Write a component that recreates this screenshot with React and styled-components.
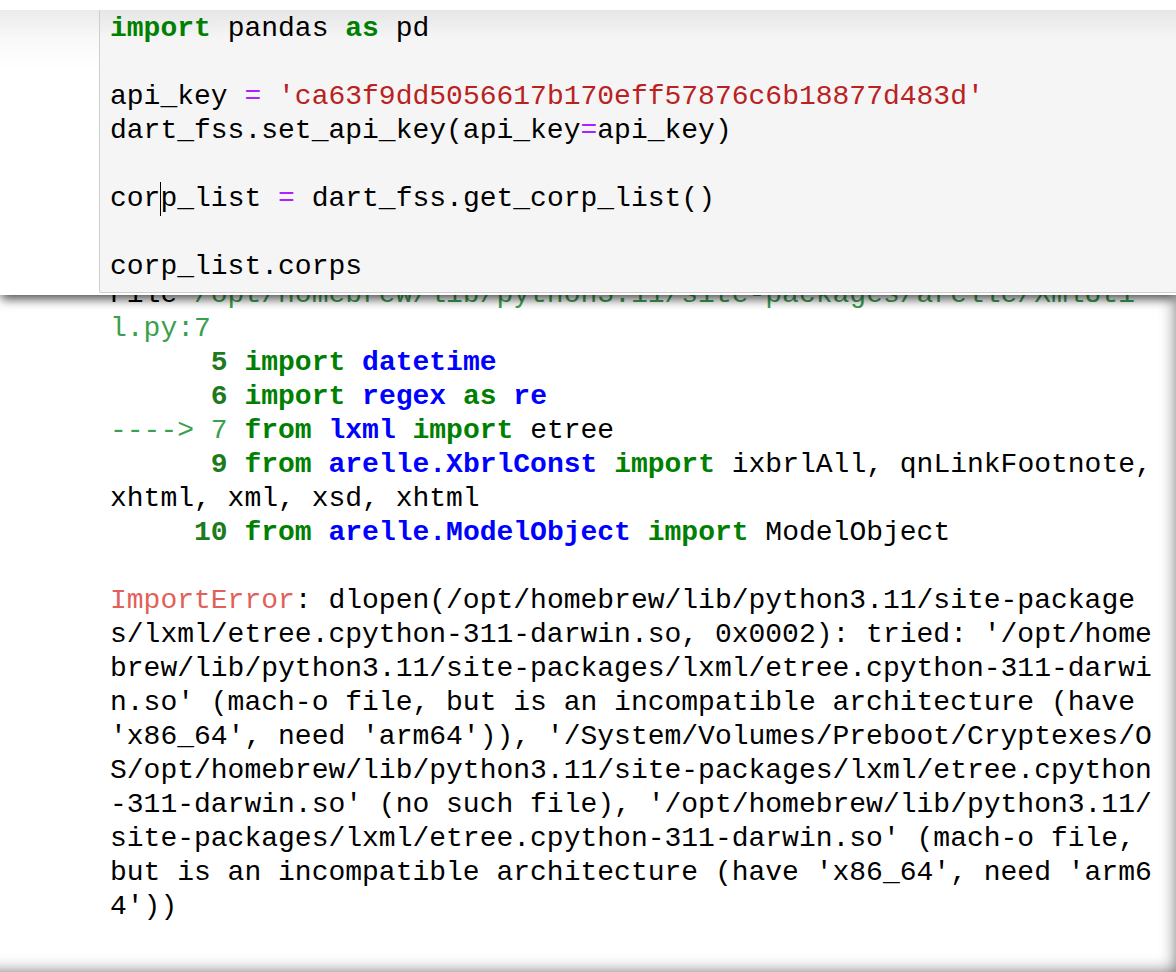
import styled, { createGlobalStyle } from "styled-components";

const GlobalStyle = createGlobalStyle`
  html, body {
    margin: 0;
    padding: 0;
    background: #ffffff;
  }
  body {
    font-family: "Liberation Mono", "DejaVu Sans Mono", monospace;
  }
`;

const tones = {
    plain: { color: "#000000", weight: 400 },
    kw: { color: "#008000", weight: 700 },
    op: { color: "#aa22ff", weight: 400 },
    str: { color: "#ba2121", weight: 400 },
    mod: { color: "#0000ff", weight: 700 },
    lineno: { color: "#1f7a1f", weight: 700 },
    path: { color: "#3a9f4f", weight: 400 },
    err: { color: "#e25f5a", weight: 400 },
};

const Page = styled.div`
    position: relative;
    width: 1176px;
    height: 972px;
    overflow: hidden;
`;

const OutputScroll = styled.div`
    box-sizing: border-box;
    width: 1216px;
    height: 972px;
    margin-left: -40px;
    padding: 278px 0 0 150px;
    background: #ffffff;
    box-shadow: inset 0 0 16px rgba(0, 0, 0, 0.55);
`;

const Pre = styled.div`
    font-family: "Liberation Mono", "DejaVu Sans Mono", monospace;
    font-size: 28px;
    line-height: 34px;
    white-space: pre;
    color: #000;
`;

const Line = styled.div`
    height: 34px;
`;

const Token = styled.span`
    color: ${(p) => tones[p.$tone].color};
    font-weight: ${(p) => tones[p.$tone].weight};
`;

const Header = styled.div`
    position: absolute;
    top: 0;
    left: 0;
    right: 0;
    padding-top: 10px;
    background: #ffffff;
    box-shadow: 0 5px 10px -1px rgba(0, 0, 0, 0.7);
`;

const HeaderBody = styled.div`
    display: flex;
    padding-bottom: 1px;
    background: linear-gradient(#ebebeb, #f9f9f9 30px, #ffffff 60px);
`;

const Gutter = styled.div`
    width: 99px;
    flex: none;
`;

const Cell = styled.div`
    flex: 1;
    margin-bottom: 1px;
    padding: 2px 0 8px 10px;
    border-left: 1px solid #cfcfcf;
    border-bottom: 1px solid #cfcfcf;
    border-bottom-left-radius: 2px;
    background: linear-gradient(#e6e6e6, #f5f5f5 28px);
`;

const Cursor = styled.span`
    display: inline-block;
    width: 0;
    height: 34px;
    margin-right: -1px;
    vertical-align: top;
    border-left: 1px solid #000;
`;

const T = ({ t = "plain", children }) => <Token $tone={t}>{children}</Token>;

const codeLines = [
    [<T t="kw">import</T>, " pandas ", <T t="kw">as</T>, " pd"],
    [],
    ["api_key ", <T t="op">=</T>, " ", <T t="str">'ca63f9dd5056617b170eff57876c6b18877d483d'</T>],
    ["dart_fss.set_api_key(api_key", <T t="op">=</T>, "api_key)"],
    [],
    ["cor", <Cursor />, "p_list ", <T t="op">=</T>, " dart_fss.get_corp_list()"],
    [],
    ["corp_list.corps"],
];

const outLines = [
    ["File ", <T t="path">/opt/homebrew/lib/python3.11/site-packages/arelle/XmlUti</T>],
    [<T t="path">l.py:7</T>],
    [<T t="lineno">      5</T>, " ", <T t="kw">import</T>, " ", <T t="mod">datetime</T>],
    [<T t="lineno">      6</T>, " ", <T t="kw">import</T>, " ", <T t="mod">regex</T>, " ", <T t="kw">as</T>, " ", <T t="mod">re</T>],
    [<T t="path">----&gt; 7</T>, " ", <T t="kw">from</T>, " ", <T t="mod">lxml</T>, " ", <T t="kw">import</T>, " etree"],
    [<T t="lineno">      9</T>, " ", <T t="kw">from</T>, " ", <T t="mod">arelle.XbrlConst</T>, " ", <T t="kw">import</T>, " ixbrlAll, qnLinkFootnote,"],
    ["xhtml, xml, xsd, xhtml"],
    [<T t="lineno">     10</T>, " ", <T t="kw">from</T>, " ", <T t="mod">arelle.ModelObject</T>, " ", <T t="kw">import</T>, " ModelObject"],
    [],
    [<T t="err">ImportError</T>, ": dlopen(/opt/homebrew/lib/python3.11/site-package"],
    ["s/lxml/etree.cpython-311-darwin.so, 0x0002): tried: '/opt/home"],
    ["brew/lib/python3.11/site-packages/lxml/etree.cpython-311-darwi"],
    ["n.so' (mach-o file, but is an incompatible architecture (have"],
    ["'x86_64', need 'arm64')), '/System/Volumes/Preboot/Cryptexes/O"],
    ["S/opt/homebrew/lib/python3.11/site-packages/lxml/etree.cpython"],
    ["-311-darwin.so' (no such file), '/opt/homebrew/lib/python3.11/"],
    ["site-packages/lxml/etree.cpython-311-darwin.so' (mach-o file,"],
    ["but is an incompatible architecture (have 'x86_64', need 'arm6"],
    ["4'))"],
];

const renderLines = (lines) =>
    lines.map((parts, i) => (
        <Line key={i}>
            {parts.map((p, j) => (
                <span key={j}>{p}</span>
            ))}
        </Line>
    ));

const App = () => {
    return (
        <Page>
            <GlobalStyle />
            <OutputScroll>
                <Pre>{renderLines(outLines)}</Pre>
            </OutputScroll>
            <Header>
                <HeaderBody>
                    <Gutter />
                    <Cell>
                        <Pre>{renderLines(codeLines)}</Pre>
                    </Cell>
                </HeaderBody>
            </Header>
        </Page>
    );
};

export default App;
